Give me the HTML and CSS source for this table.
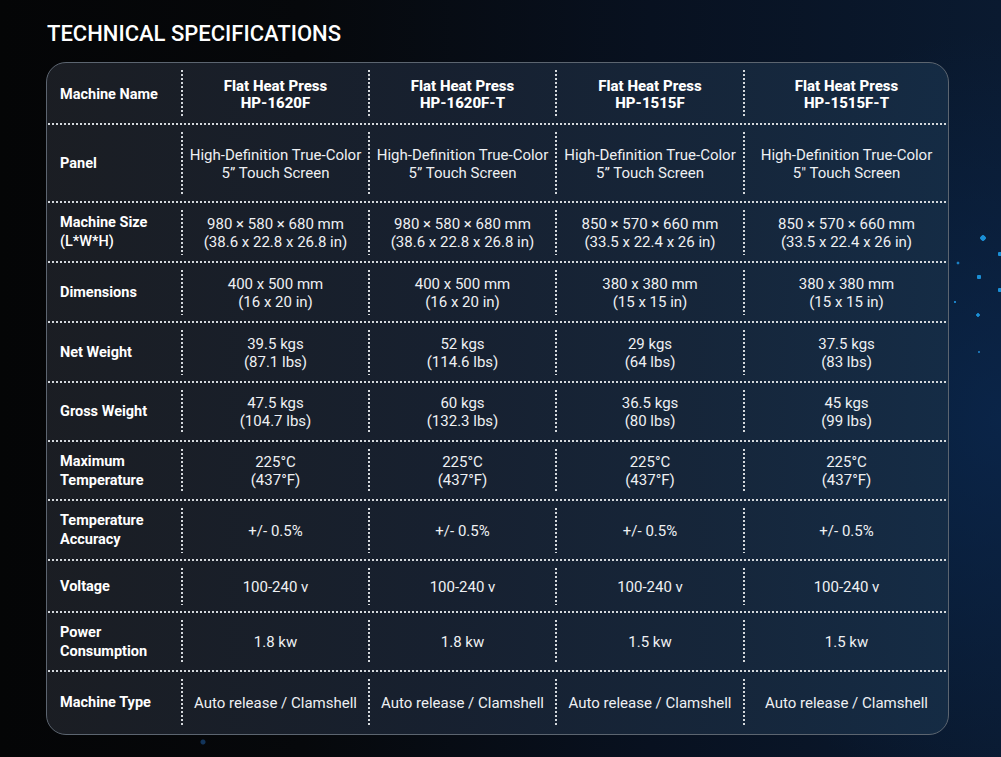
FILE: index.html
```html
<!DOCTYPE html>
<html lang="en">
<head>
<meta charset="utf-8">
<title>Technical Specifications</title>
<link rel="stylesheet" href="styles.css">
</head>
<body>
<main class="page">
  <h1 class="title">TECHNICAL SPECIFICATIONS</h1>
  <section class="specs">
    <div class="row r-head">
      <div class="label"><span>Machine Name</span></div>
      <div class="cell head">Flat Heat Press<br>HP-1620F</div>
      <div class="cell head">Flat Heat Press<br>HP-1620F-T</div>
      <div class="cell head">Flat Heat Press<br>HP-1515F</div>
      <div class="cell head">Flat Heat Press<br>HP-1515F-T</div>
    </div>
    <div class="row r-panel">
      <div class="label"><span>Panel</span></div>
      <div class="cell">High-Definition True-Color<br>5” Touch Screen</div>
      <div class="cell">High-Definition True-Color<br>5” Touch Screen</div>
      <div class="cell">High-Definition True-Color<br>5” Touch Screen</div>
      <div class="cell">High-Definition True-Color<br>5" Touch Screen</div>
    </div>
    <div class="row r-size">
      <div class="label"><span>Machine Size<br><span class="thin">(L*W*H)</span></span></div>
      <div class="cell">980 × 580 × 680 mm<br>(38.6 x 22.8 x 26.8 in)</div>
      <div class="cell">980 × 580 × 680 mm<br>(38.6 x 22.8 x 26.8 in)</div>
      <div class="cell">850 × 570 × 660 mm<br>(33.5 x 22.4 x 26 in)</div>
      <div class="cell">850 × 570 × 660 mm<br>(33.5 x 22.4 x 26 in)</div>
    </div>
    <div class="row r-dim">
      <div class="label"><span>Dimensions</span></div>
      <div class="cell">400 x 500 mm<br>(16 x 20 in)</div>
      <div class="cell">400 x 500 mm<br>(16 x 20 in)</div>
      <div class="cell">380 x 380 mm<br>(15 x 15 in)</div>
      <div class="cell">380 x 380 mm<br>(15 x 15 in)</div>
    </div>
    <div class="row r-net">
      <div class="label"><span>Net Weight</span></div>
      <div class="cell">39.5 kgs<br>(87.1 lbs)</div>
      <div class="cell">52 kgs<br>(114.6 lbs)</div>
      <div class="cell">29 kgs<br>(64 lbs)</div>
      <div class="cell">37.5 kgs<br>(83 lbs)</div>
    </div>
    <div class="row r-gross">
      <div class="label"><span>Gross Weight</span></div>
      <div class="cell">47.5 kgs<br>(104.7 lbs)</div>
      <div class="cell">60 kgs<br>(132.3 lbs)</div>
      <div class="cell">36.5 kgs<br>(80 lbs)</div>
      <div class="cell">45 kgs<br>(99 lbs)</div>
    </div>
    <div class="row r-max">
      <div class="label"><span>Maximum<br>Temperature</span></div>
      <div class="cell">225°C<br>(437°F)</div>
      <div class="cell">225°C<br>(437°F)</div>
      <div class="cell">225°C<br>(437°F)</div>
      <div class="cell">225°C<br>(437°F)</div>
    </div>
    <div class="row r-acc">
      <div class="label"><span>Temperature<br>Accuracy</span></div>
      <div class="cell">+/- 0.5%</div>
      <div class="cell">+/- 0.5%</div>
      <div class="cell">+/- 0.5%</div>
      <div class="cell">+/- 0.5%</div>
    </div>
    <div class="row r-volt">
      <div class="label"><span>Voltage</span></div>
      <div class="cell">100-240 v</div>
      <div class="cell">100-240 v</div>
      <div class="cell">100-240 v</div>
      <div class="cell">100-240 v</div>
    </div>
    <div class="row r-power">
      <div class="label"><span>Power<br>Consumption</span></div>
      <div class="cell">1.8 kw</div>
      <div class="cell">1.8 kw</div>
      <div class="cell">1.5 kw</div>
      <div class="cell">1.5 kw</div>
    </div>
    <div class="row r-type">
      <div class="label"><span>Machine Type</span></div>
      <div class="cell">Auto release / Clamshell</div>
      <div class="cell">Auto release / Clamshell</div>
      <div class="cell">Auto release / Clamshell</div>
      <div class="cell">Auto release / Clamshell</div>
    </div>
  </section>
</main>
</body>
</html>
```

FILE: styles.css
```css
html, body {
  margin: 0;
  padding: 0;
}

body {
  width: 1001px;
  height: 757px;
  overflow: hidden;
  font-family: Roboto, "Liberation Sans", Arial, sans-serif;
  color: #eef0f3;
  background:
    radial-gradient(circle at 983px 238px, #1a8fd6 0 2.5px, transparent 3px),
    radial-gradient(circle at 958px 263px, #1a7fc4 0 1.2px, transparent 1.7px),
    radial-gradient(circle at 979px 277px, #1a8fd6 0 2px, transparent 2.5px),
    radial-gradient(circle at 955px 302px, #1a7fc4 0 1px, transparent 1.5px),
    radial-gradient(circle at 978px 315px, #1a8fd6 0 1.5px, transparent 2px),
    radial-gradient(circle at 979px 352px, #1a6fae 0 1px, transparent 1.5px),
    radial-gradient(circle at 1000px 254px, #1a8fd6 0 2px, transparent 2.5px),
    radial-gradient(circle at 1000px 290px, #1a8fd6 0 2px, transparent 2.5px),
    radial-gradient(circle at 203px 742px, #12345a 0 2px, transparent 3px),
    radial-gradient(ellipse 420px 520px at 1001px 420px, rgba(10, 40, 80, 0.75), transparent 75%),
    linear-gradient(90deg, #040506 0%, #06080b 30%, #081120 65%, #0a1a30 100%);
}

.page {
  padding: 20px 0 0 46px;
}

.title {
  margin: 0 0 15px 1px;
  font-size: 22px;
  line-height: 27px;
  font-weight: 500;
  letter-spacing: 0;
  color: #ffffff;
}

.specs {
  width: 901px;
  border: 1px solid #5c6570;
  border-radius: 20px;
  overflow: hidden;
  background: linear-gradient(90deg, rgba(28, 31, 37, 0.94) 0%, rgba(24, 34, 50, 0.93) 45%, rgba(22, 45, 70, 0.9) 100%);
  display: flex;
  flex-direction: column;
}

.row {
  display: grid;
  grid-template-columns: 134px 187px 187px 188px 1fr;
  background-image: linear-gradient(90deg, #d4d8dc 50%, transparent 50%);
  background-size: 4px 2px;
  background-repeat: repeat-x;
  background-position: 1px bottom;
  padding-bottom: 2px;
  box-sizing: border-box;
}

.row:last-child {
  background-image: none;
}

.r-head { height: 62px; }
.r-panel { height: 78px; }
.r-size { height: 60px; }
.r-dim { height: 60px; }
.r-net { height: 60px; }
.r-gross { height: 59px; }
.r-max { height: 59px; }
.r-acc { height: 60px; }
.r-volt { height: 52px; }
.r-power { height: 59px; }
.r-type { height: 62px; }

.label {
  display: flex;
  align-items: center;
  padding-left: 13px;
  font-size: 14.5px;
  line-height: 19px;
  font-weight: 700;
  color: #ffffff;
}

.r-head .label {
  padding-top: 2px;
}

.thin {
  font-weight: 500;
}

.cell {
  margin: 7px 0 6px;
  display: flex;
  align-items: center;
  justify-content: center;
  text-align: center;
  font-size: 15px;
  line-height: 18px;
  color: #eef0f3;
  background-image: linear-gradient(180deg, #d4d8dc 50%, transparent 50%);
  background-size: 2px 4px;
  background-repeat: repeat-y;
  background-position: left top;
  padding-left: 2px;
}

.cell.head {
  font-weight: 800;
  color: #ffffff;
  line-height: 17px;
  padding-top: 2px;
  box-sizing: border-box;
}
```
